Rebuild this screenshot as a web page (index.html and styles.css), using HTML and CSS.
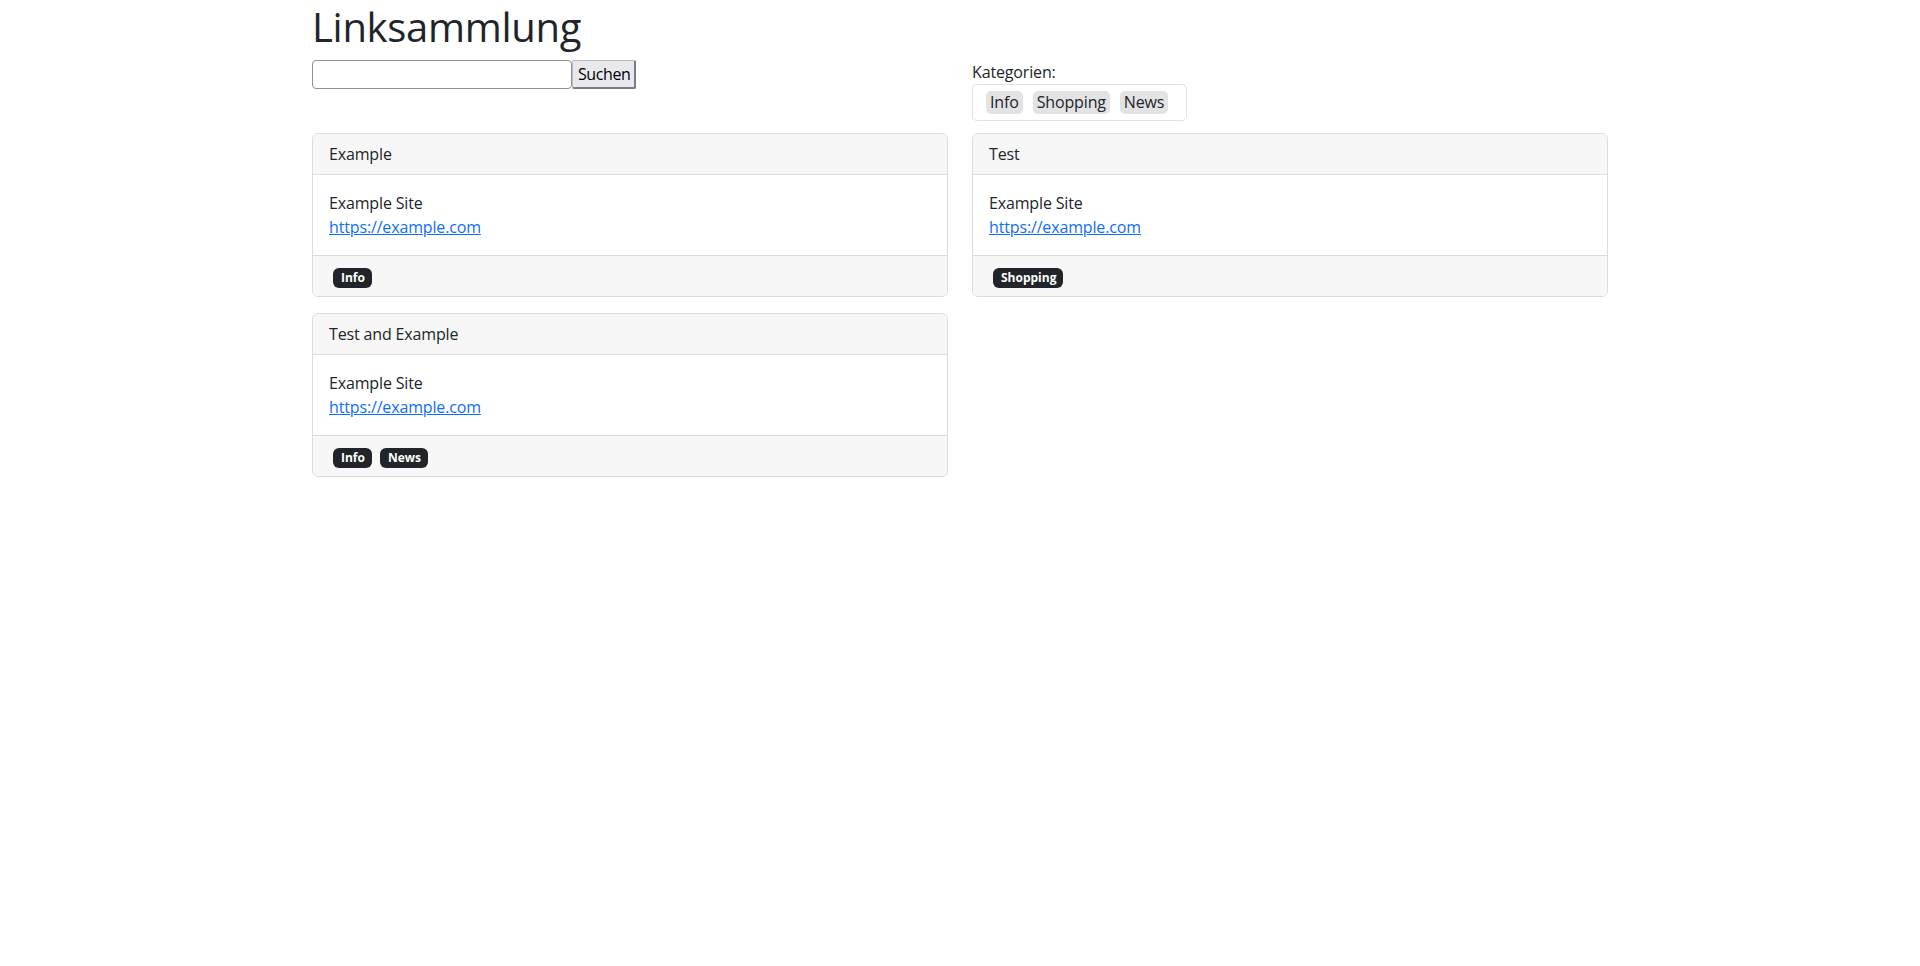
FILE: index.html
```html
<!DOCTYPE html>
<html lang="de">
<head>
<meta charset="utf-8">
<title>Linksammlung</title>
<link rel="stylesheet" href="styles.css">
</head>
<body>
<div class="container">
  <h1 class="title">Linksammlung</h1>
  <div class="top-row">
    <form class="search">
      <input class="search-input" type="text">
      <button class="search-btn" type="button">Suchen</button>
    </form>
    <div class="categories">
      <div class="cat-label">Kategorien:</div>
      <div class="cat-box">
        <span class="cat">Info</span>
        <span class="cat">Shopping</span>
        <span class="cat">News</span>
      </div>
    </div>
  </div>
  <div class="cards">
    <div class="card">
      <div class="card-header">Example</div>
      <div class="card-body">
        <div class="site">Example Site</div>
        <a class="link" href="#">https://example.com</a>
      </div>
      <div class="card-footer"><span class="badge">Info</span></div>
    </div>
    <div class="card">
      <div class="card-header">Test</div>
      <div class="card-body">
        <div class="site">Example Site</div>
        <a class="link" href="#">https://example.com</a>
      </div>
      <div class="card-footer"><span class="badge">Shopping</span></div>
    </div>
    <div class="card">
      <div class="card-header">Test and Example</div>
      <div class="card-body">
        <div class="site">Example Site</div>
        <a class="link" href="#">https://example.com</a>
      </div>
      <div class="card-footer"><span class="badge">Info</span><span class="badge">News</span></div>
    </div>
  </div>
</div>
</body>
</html>
```
FILE: styles.css
```css
* { box-sizing: border-box; }

body {
  margin: 0;
  font-family: "Open Sans", "Noto Sans", "Liberation Sans", sans-serif;
  font-size: 16px;
  line-height: 1.5;
  color: #212529;
  background: #fff;
  letter-spacing: -0.15px;
}

.container {
  max-width: 1320px;
  margin: 0 auto;
  padding: 0 12px;
}

.title {
  margin: 0;
  font-size: 40px;
  font-weight: 500;
  line-height: 54px;
  letter-spacing: -0.3px;
}

.top-row {
  display: grid;
  grid-template-columns: 1fr 1fr;
  column-gap: 24px;
  margin-top: 6px;
  align-items: start;
}

.search {
  display: flex;
  margin: 0;
}

.search-input {
  width: 260px;
  height: 29px;
  border: 1px solid #8f8f9d;
  border-radius: 4px;
  padding: 2px 4px;
  font: inherit;
  background: #fff;
}

.search-btn {
  height: 29px;
  padding: 0 4px 0 5px;
  font-family: inherit;
  font-size: 16px;
  color: #000;
  background: #e9e9ed;
  border: 1px solid #b9b9c0;
  border-right: 2px solid #7a7a82;
  border-bottom: 2px solid #7a7a82;
  border-radius: 2px;
  letter-spacing: -0.4px;
}

.cat-label {
  line-height: 24px;
}

.cat-box {
  display: inline-flex;
  align-items: center;
  gap: 10px;
  height: 37px;
  padding: 0 18px 0 13px;
  border: 1px solid #dee2e6;
  border-radius: 5px;
}

.cat {
  display: inline-block;
  line-height: 23px;
  padding: 0 4px;
  background: #e3e3e3;
  border-radius: 5px;
  color: #212529;
}

.cards {
  display: grid;
  grid-template-columns: 1fr 1fr;
  column-gap: 24px;
  row-gap: 16px;
  margin-top: 12px;
  align-items: start;
}

.card {
  border: 1px solid #dcdcdc;
  border-radius: 6px;
  overflow: hidden;
  background: #fff;
}

.card-header {
  padding: 8px 16px;
  line-height: 24px;
  background: #f7f7f7;
  border-bottom: 1px solid #dcdcdc;
}

.card-body {
  padding: 16px;
  line-height: 24px;
}

.link {
  color: #0d6efd;
  text-decoration: underline;
}

.card-footer {
  padding: 8px 16px;
  line-height: 24px;
  height: 41px;
  background: #f7f7f7;
  border-top: 1px solid #dcdcdc;
}

.badge {
  display: inline-block;
  margin: 0 4px;
  padding: 4px 7px 4px 8px;
  font-size: 12px;
  font-weight: 700;
  line-height: 12px;
  letter-spacing: 0;
  color: #fff;
  background: #212529;
  border-radius: 6px;
  vertical-align: 0;
}
```
